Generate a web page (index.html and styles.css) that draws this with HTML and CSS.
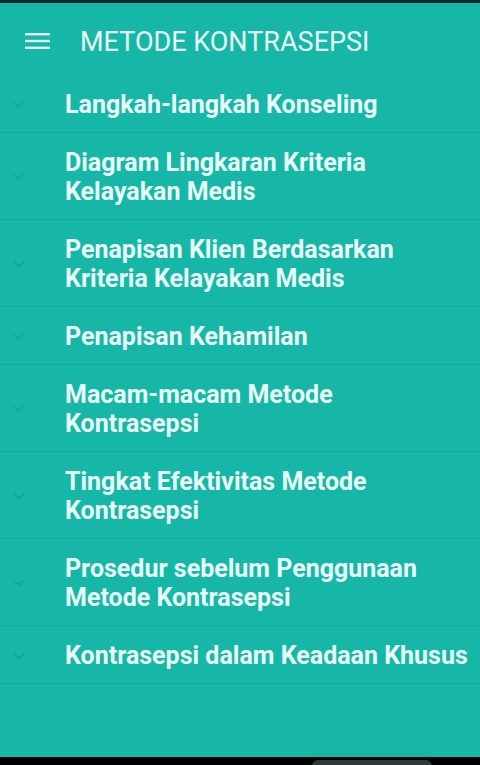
FILE: index.html
```html
<!DOCTYPE html>
<html>
<head>
<meta charset="utf-8">
<link rel="stylesheet" href="styles.css">
</head>
<body>
<div class="screen">
  <div class="statusbar"></div>
  <header class="appbar">
    <svg class="menu" width="26" height="18" viewBox="0 0 26 18"><rect x="0" y="1" width="25" height="2.4" fill="#e6fbf6"/><rect x="0" y="7.8" width="25" height="2.4" fill="#e6fbf6"/><rect x="0" y="14.6" width="25" height="2.4" fill="#e6fbf6"/></svg>
    <h1 class="title">METODE KONTRASEPSI</h1>
  </header>
  <ul class="list">
    <li class="item"><span class="chev"><svg width="12" height="8" viewBox="0 0 12 8"><path d="M1 1.5 L6 6 L11 1.5" fill="none" stroke="#10a696" stroke-width="1.6"/></svg></span><span class="label">Langkah-langkah Konseling</span></li>
    <li class="item"><span class="chev"><svg width="12" height="8" viewBox="0 0 12 8"><path d="M1 1.5 L6 6 L11 1.5" fill="none" stroke="#10a696" stroke-width="1.6"/></svg></span><span class="label">Diagram Lingkaran Kriteria<br>Kelayakan Medis</span></li>
    <li class="item"><span class="chev"><svg width="12" height="8" viewBox="0 0 12 8"><path d="M1 1.5 L6 6 L11 1.5" fill="none" stroke="#10a696" stroke-width="1.6"/></svg></span><span class="label">Penapisan Klien Berdasarkan<br>Kriteria Kelayakan Medis</span></li>
    <li class="item"><span class="chev"><svg width="12" height="8" viewBox="0 0 12 8"><path d="M1 1.5 L6 6 L11 1.5" fill="none" stroke="#10a696" stroke-width="1.6"/></svg></span><span class="label">Penapisan Kehamilan</span></li>
    <li class="item"><span class="chev"><svg width="12" height="8" viewBox="0 0 12 8"><path d="M1 1.5 L6 6 L11 1.5" fill="none" stroke="#10a696" stroke-width="1.6"/></svg></span><span class="label">Macam-macam Metode<br>Kontrasepsi</span></li>
    <li class="item"><span class="chev"><svg width="12" height="8" viewBox="0 0 12 8"><path d="M1 1.5 L6 6 L11 1.5" fill="none" stroke="#10a696" stroke-width="1.6"/></svg></span><span class="label">Tingkat Efektivitas Metode<br>Kontrasepsi</span></li>
    <li class="item"><span class="chev"><svg width="12" height="8" viewBox="0 0 12 8"><path d="M1 1.5 L6 6 L11 1.5" fill="none" stroke="#10a696" stroke-width="1.6"/></svg></span><span class="label">Prosedur sebelum Penggunaan<br>Metode Kontrasepsi</span></li>
    <li class="item last"><span class="chev"><svg width="12" height="8" viewBox="0 0 12 8"><path d="M1 1.5 L6 6 L11 1.5" fill="none" stroke="#10a696" stroke-width="1.6"/></svg></span><span class="label">Kontrasepsi dalam Keadaan Khusus</span></li>
  </ul>
  <div class="navbar"><div class="pill"></div></div>
</div>
</body>
</html>
```
FILE: styles.css
```css
* { box-sizing: border-box; }
html, body { margin: 0; padding: 0; background: #000; }
body { font-family: Roboto, "Noto Sans", sans-serif; }
.screen {
  width: 480px;
  height: 765px;
  display: flex;
  flex-direction: column;
  background: #17b7a7;
  overflow: hidden;
}
.statusbar { height: 3px; background: #0b2a28; flex: none; }
.appbar {
  height: 72px;
  flex: none;
  display: flex;
  align-items: center;
  padding-left: 25px;
  padding-top: 5px;
}
.menu { display: block; margin-top: -2px; }
.title {
  margin: 0 0 0 29px;
  font-size: 27px;
  font-weight: 400;
  color: #e6fbf6;
}
.list { list-style: none; margin: 0; padding: 0; flex: 1; }
.item {
  display: flex;
  align-items: center;
  padding: 15px 0 13px;
  border-bottom: 1px solid #13ab9b;
}
.chev { width: 65px; flex: none; padding-left: 13px; display: flex; }
.label {
  font-size: 25px;
  font-weight: 700;
  line-height: 29px;
  color: #e8fdf7;
}
.navbar {
  height: 8px;
  flex: none;
  background: #000;
  position: relative;
}
.pill {
  position: absolute;
  left: 312px;
  top: 3px;
  width: 120px;
  height: 12px;
  border-radius: 8px;
  background: #2e3a39;
}
```
